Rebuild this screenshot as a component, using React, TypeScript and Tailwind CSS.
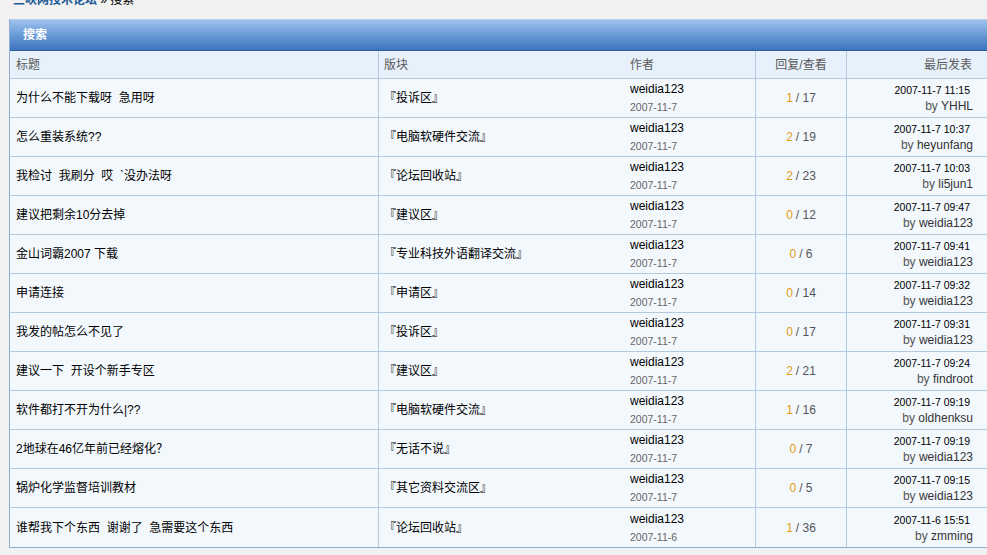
const font = 'font-["Liberation_Sans","Noto_Sans_CJK_SC",sans-serif]'

interface Topic {
  title: string
  forum: string
  author: string
  posted: string
  replies: number
  views: number
  lastTime: string
  lastBy: string
}

const topics: Topic[] = [
  { title: "为什么不能下载呀  急用呀", forum: "『投诉区』", author: "weidia123", posted: "2007-11-7", replies: 1, views: 17, lastTime: "2007-11-7 11:15", lastBy: "YHHL" },
  { title: "怎么重装系统??", forum: "『电脑软硬件交流』", author: "weidia123", posted: "2007-11-7", replies: 2, views: 19, lastTime: "2007-11-7 10:37", lastBy: "heyunfang" },
  { title: "我检讨  我刷分  哎  `没办法呀", forum: "『论坛回收站』", author: "weidia123", posted: "2007-11-7", replies: 2, views: 23, lastTime: "2007-11-7 10:03", lastBy: "li5jun1" },
  { title: "建议把剩余10分去掉", forum: "『建议区』", author: "weidia123", posted: "2007-11-7", replies: 0, views: 12, lastTime: "2007-11-7 09:47", lastBy: "weidia123" },
  { title: "金山词霸2007 下载", forum: "『专业科技外语翻译交流』", author: "weidia123", posted: "2007-11-7", replies: 0, views: 6, lastTime: "2007-11-7 09:41", lastBy: "weidia123" },
  { title: "申请连接", forum: "『申请区』", author: "weidia123", posted: "2007-11-7", replies: 0, views: 14, lastTime: "2007-11-7 09:32", lastBy: "weidia123" },
  { title: "我发的帖怎么不见了", forum: "『投诉区』", author: "weidia123", posted: "2007-11-7", replies: 0, views: 17, lastTime: "2007-11-7 09:31", lastBy: "weidia123" },
  { title: "建议一下  开设个新手专区", forum: "『建议区』", author: "weidia123", posted: "2007-11-7", replies: 2, views: 21, lastTime: "2007-11-7 09:24", lastBy: "findroot" },
  { title: "软件都打不开为什么|??", forum: "『电脑软硬件交流』", author: "weidia123", posted: "2007-11-7", replies: 1, views: 16, lastTime: "2007-11-7 09:19", lastBy: "oldhenksu" },
  { title: "2地球在46亿年前已经熔化？", forum: "『无话不说』", author: "weidia123", posted: "2007-11-7", replies: 0, views: 7, lastTime: "2007-11-7 09:19", lastBy: "weidia123" },
  { title: "锅炉化学监督培训教材", forum: "『其它资料交流区』", author: "weidia123", posted: "2007-11-7", replies: 0, views: 5, lastTime: "2007-11-7 09:15", lastBy: "weidia123" },
  { title: "谁帮我下个东西  谢谢了  急需要这个东西", forum: "『论坛回收站』", author: "weidia123", posted: "2007-11-6", replies: 1, views: 36, lastTime: "2007-11-6 15:51", lastBy: "zmming" },
]

const cols = "grid grid-cols-[369px_245px_132px_91px_1fr]"

export default function App() {
  return (
    <div className={`w-[987px] h-[555px] overflow-hidden bg-[#f1f1f1] ${font}`}>
      {/* breadcrumb */}
      <div className="-mt-[7px] h-[14px] pl-[13px] text-[12px] leading-[14px] whitespace-pre">
        <span className="font-bold text-[#1b5a96]">三峡网技术论坛</span>
        <span className="text-black"> » 搜索</span>
      </div>

      <div className="ml-[9px] mt-[12px] w-[990px] border border-[#8eadd0] border-t-[#b9d0ea] bg-[#f3f8fd]">
        {/* title bar */}
        <div className="h-[31px] bg-gradient-to-b from-[#9dc2ec] via-[#6a9bd8] to-[#3c74bd] border-b border-[#2d5d9b] flex items-center pl-[13px]">
          <span className="text-white font-bold text-[12px]">搜索</span>
        </div>

        {/* column headings */}
        <div className={`${cols} h-[28px] bg-[#e7f1fb] border-b border-[#b3cadf] text-[12px] text-[#5a5a5a]`}>
          <div className="border-r border-[#b3cadf] pl-[6px] flex items-center">标题</div>
          <div className="pl-[5px] flex items-center">版块</div>
          <div className="border-r border-[#b3cadf] pl-[6px] flex items-center">作者</div>
          <div className="border-r border-[#b3cadf] flex items-center justify-center">回复/查看</div>
          <div className="pr-[26px] flex items-center justify-end">最后发表</div>
        </div>

        {topics.map((t, i) => (
          <div
            key={i}
            className={`${cols} h-[39px] ${i < topics.length - 1 ? "border-b border-[#b3cadf]" : ""}`}
          >
            <div className="border-r border-[#b3cadf] pl-[6px] flex items-center text-[12px] text-black whitespace-pre">
              {t.title}
            </div>
            <div className="pl-[5px] flex items-center text-[12px] text-black">{t.forum}</div>
            <div className="border-r border-[#b3cadf] pl-[6px] flex flex-col justify-center">
              <span className="text-[12px] leading-[18px] text-black">{t.author}</span>
              <span className="text-[10.5px] leading-[18px] text-[#666]">{t.posted}</span>
            </div>
            <div className="border-r border-[#b3cadf] flex items-center justify-center text-[12px] text-[#555]">
              <span className="text-[#e39a12]">{t.replies}</span>
              <span className="ml-[3px]">/ {t.views}</span>
            </div>
            <div className="pr-[25px] flex flex-col items-end justify-center">
              <span className="text-[10.5px] leading-[16px] text-black pr-[3px]">{t.lastTime}</span>
              <span className="text-[12px] leading-[16px] text-[#333]">
                <span className="text-[#555]">by</span> {t.lastBy}
              </span>
            </div>
          </div>
        ))}
      </div>
    </div>
  )
}
